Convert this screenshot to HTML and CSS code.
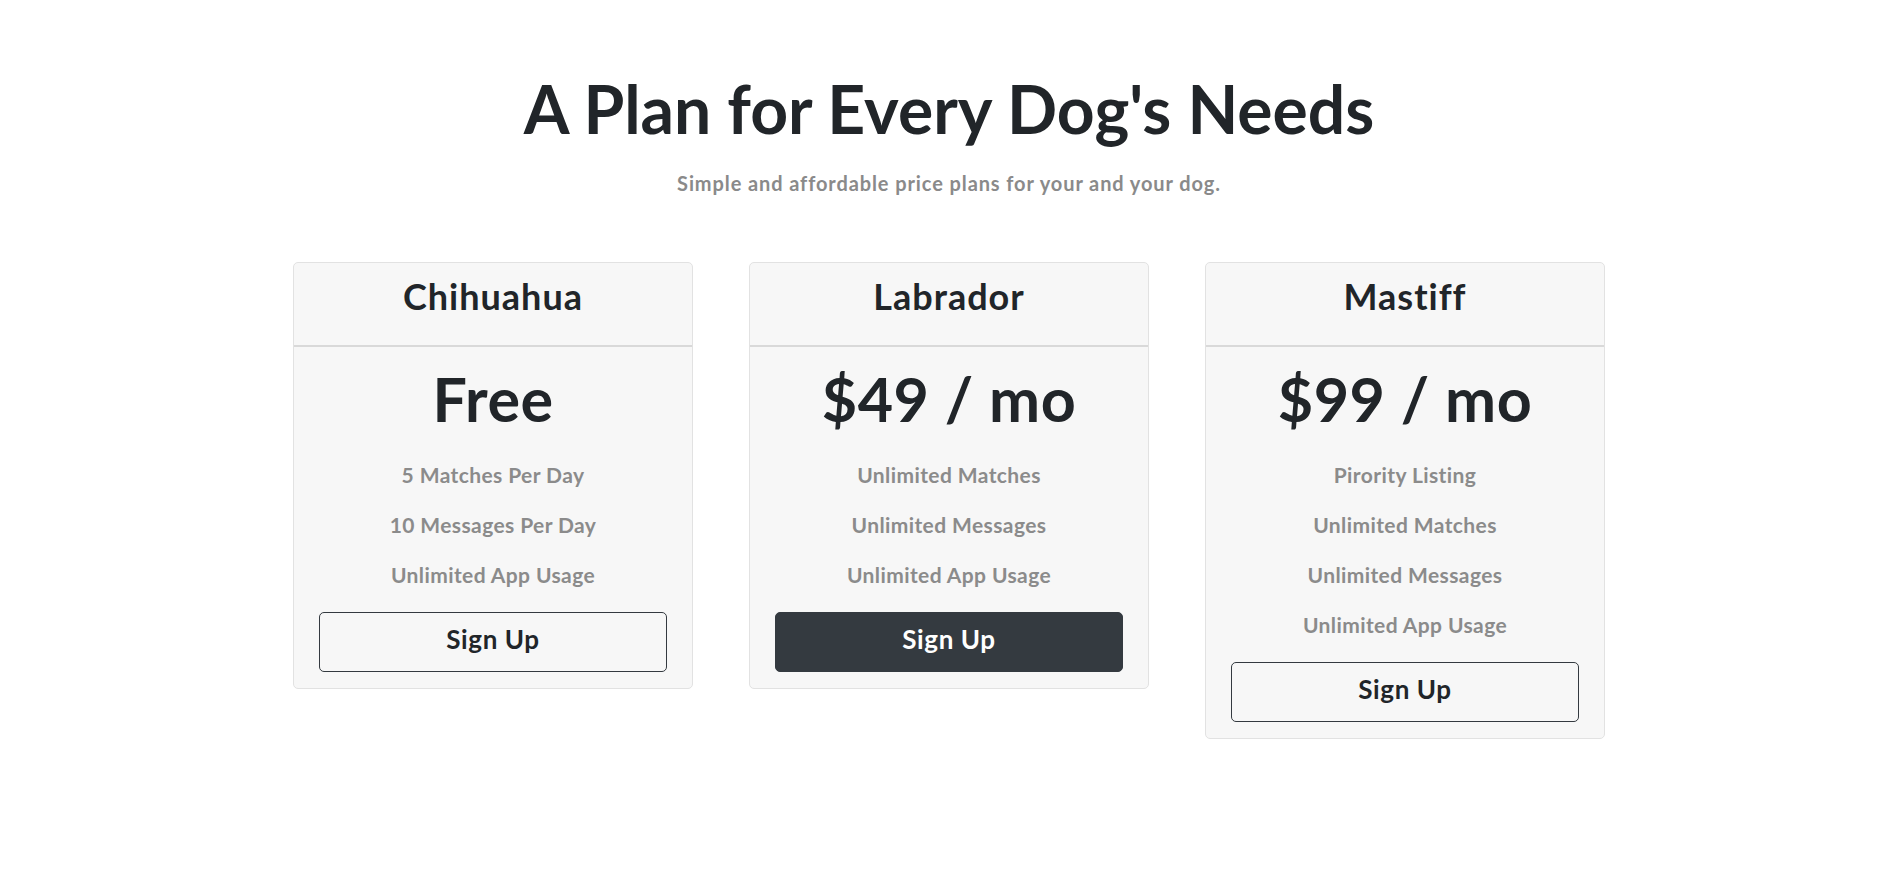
FILE: index.html
```html
<!DOCTYPE html>
<html lang="en">
<head>
<meta charset="utf-8">
<title>Pricing</title>
<link rel="stylesheet" href="styles.css">
</head>
<body>
<section class="pricing">
  <h1 class="pricing-title">A Plan for Every Dog's Needs</h1>
  <p class="pricing-sub">Simple and affordable price plans for your and your dog.</p>
  <div class="plans">
    <div class="card">
      <div class="card-header"><h3 class="plan-name">Chihuahua</h3></div>
      <div class="card-body">
        <h2 class="price">Free</h2>
        <ul class="features">
          <li>5 Matches Per Day</li>
          <li>10 Messages Per Day</li>
          <li>Unlimited App Usage</li>
        </ul>
        <button class="btn btn-outline" type="button">Sign Up</button>
      </div>
    </div>
    <div class="card">
      <div class="card-header"><h3 class="plan-name">Labrador</h3></div>
      <div class="card-body">
        <h2 class="price">$49 / mo</h2>
        <ul class="features">
          <li>Unlimited Matches</li>
          <li>Unlimited Messages</li>
          <li>Unlimited App Usage</li>
        </ul>
        <button class="btn btn-dark" type="button">Sign Up</button>
      </div>
    </div>
    <div class="card">
      <div class="card-header"><h3 class="plan-name">Mastiff</h3></div>
      <div class="card-body">
        <h2 class="price">$99 / mo</h2>
        <ul class="features">
          <li>Pirority Listing</li>
          <li>Unlimited Matches</li>
          <li>Unlimited Messages</li>
          <li>Unlimited App Usage</li>
        </ul>
        <button class="btn btn-outline" type="button">Sign Up</button>
      </div>
    </div>
  </div>
</section>
</body>
</html>
```

FILE: styles.css
```css
html, body {
  margin: 0;
  padding: 0;
  background: #ffffff;
}

body {
  font-family: Lato, "Open Sans", "DejaVu Sans", sans-serif;
  font-weight: 700;
  color: #212529;
  padding-left: 5px;
}

.pricing {
  display: flex;
  flex-direction: column;
  align-items: center;
  padding-top: 69px;
  text-align: center;
}

.pricing-title {
  margin: 0;
  font-size: 66px;
  line-height: 1.2;
  font-weight: 700;
  color: #212529;
}

.pricing-sub {
  margin: 23px 0 0;
  font-size: 20px;
  line-height: 1.2;
  letter-spacing: 0.9px;
  color: #8a8a8a;
}

.plans {
  display: flex;
  align-items: flex-start;
  justify-content: center;
  gap: 56px;
  margin-top: 67px;
}

.card {
  width: 400px;
  box-sizing: border-box;
  background: #f7f7f7;
  border: 1px solid #e2e2e2;
  border-radius: 5px;
}

.card-header {
  padding: 12px 0 27px;
  border-bottom: 2px solid #d9d9d9;
}

.plan-name {
  margin: 0;
  font-size: 36px;
  line-height: 1.2;
  letter-spacing: 1px;
  font-weight: 700;
  color: #212529;
}

.card-body {
  padding: 15px 25px 16px;
}

.price {
  margin: 0;
  font-size: 61px;
  line-height: 1.2;
  letter-spacing: 0.5px;
  font-weight: 700;
  color: #212529;
}

.features {
  list-style: none;
  margin: 14px 0 12px;
  padding: 0;
}

.features li {
  font-size: 21px;
  line-height: 50px;
  letter-spacing: 0.4px;
  color: #8b8b8b;
}

.btn {
  display: block;
  width: 100%;
  box-sizing: border-box;
  padding: 11px 0 16px;
  font-family: inherit;
  font-size: 26px;
  line-height: 1.2;
  letter-spacing: 0.6px;
  font-weight: 700;
  border-radius: 5px;
  cursor: pointer;
}

.btn-outline {
  background: transparent;
  color: #212529;
  border: 1px solid #343a40;
}

.btn-dark {
  background: #343a40;
  color: #ffffff;
  border: 1px solid #343a40;
}
```
